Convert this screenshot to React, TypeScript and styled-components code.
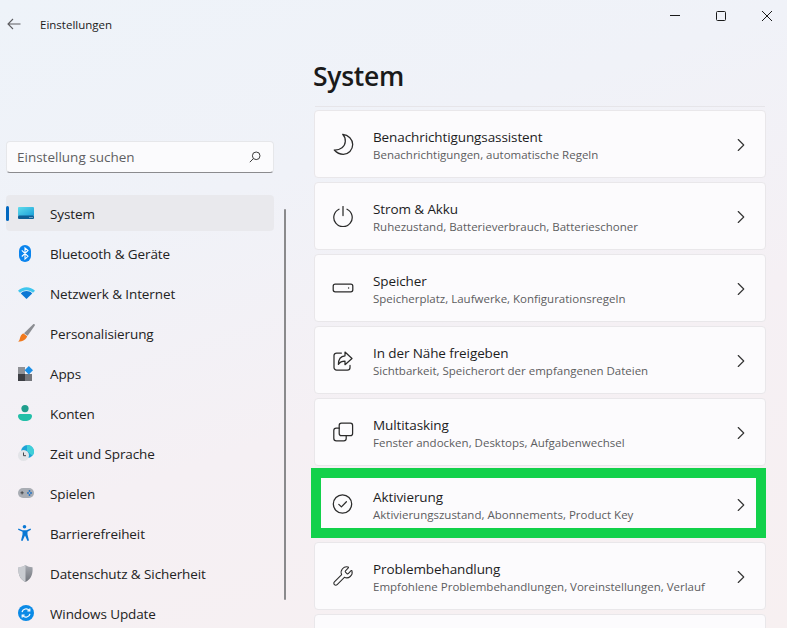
import React from "react"
import styled, { createGlobalStyle } from "styled-components"
import { ChevronRight, Wrench } from "lucide-react"

const GlobalStyle = createGlobalStyle`
  html, body {
    margin: 0;
    padding: 0;
    height: 100%;
    overflow: hidden;
    font-family: "Open Sans", "Noto Sans", "Liberation Sans", sans-serif;
  }
`

const Line = ({ children }: { children: React.ReactNode }) => (
  <svg width="22" height="22" viewBox="0 0 22 22" fill="none" stroke="#2b2b2b" strokeWidth="1.25" strokeLinecap="round" strokeLinejoin="round">
    {children}
  </svg>
)

const MoonIcon = () => (
  <Line>
    <path d="M10.7 1.3C16.5 1.8 20.7 6.5 20.7 11.6 20.7 17 16.5 21.3 11.3 21.3 7.8 21.3 4.6 19.6 2.3 17 8.5 17.2 13 13.5 13.3 8.5 13.5 5.8 12.6 3.3 10.7 1.3z" />
  </Line>
)

const PowerIcon = () => (
  <Line>
    <path d="M11 1.5v9" />
    <path d="M7 4.2a9.2 9.2 0 1 0 8 0" />
  </Line>
)

const StorageIcon = () => (
  <Line>
    <rect x="1.2" y="7.2" width="19.6" height="7.6" rx="2" />
    <circle cx="16.6" cy="11" r=".7" fill="#2b2b2b" stroke="none" />
  </Line>
)

const ShareIcon = () => (
  <Line>
    <path d="M9.4 4H4.6A2.6 2.6 0 0 0 2 6.6v11.8A2.6 2.6 0 0 0 4.6 21h10.8a2.6 2.6 0 0 0 2.6-2.6v-2" />
    <path d="M13 3l7 6.5-7 6.2v-3.5c-3 0-5 .8-6.6 3.2 0-5 2.4-8.3 6.6-8.600z" />
  </Line>
)

const MultitaskIcon = () => (
  <Line>
    <rect x="7.2" y="2.2" width="13.4" height="12.4" rx="2.2" />
    <path d="M7.2 7.2H4.2a2.4 2.4 0 0 0-2.4 2.4v7.6a2.6 2.6 0 0 0 2.6 2.6h7.4a2.4 2.4 0 0 0 2.4-2.4v-2.8" />
  </Line>
)

const CheckIcon = () => (
  <Line>
    <circle cx="10.5" cy="11" r="9.2" />
    <path d="M6.8 11.4l2.6 2.5 5-5.2" />
  </Line>
)

const SystemIcon = () => (
  <svg width="16" height="12" viewBox="0 0 16 12">
    <defs>
      <linearGradient id="sys" x1="0" y1="0" x2="1" y2="1">
        <stop offset="0" stopColor="#5fdcec" />
        <stop offset="1" stopColor="#1a9fd8" />
      </linearGradient>
    </defs>
    <rect width="16" height="9" rx="1" fill="url(#sys)" />
    <rect width="16" height="3.6" y="8.4" rx="1" fill="#0e5f95" />
    <rect x="11.5" y="10" width="1" height="1" fill="#cfe6f2" />
    <rect x="13.5" y="10" width="1" height="1" fill="#cfe6f2" />
  </svg>
)

const BluetoothIcon = () => (
  <svg width="14" height="17" viewBox="0 0 14 17">
    <rect x="1" width="12" height="17" rx="6" fill="#0a84ee" />
    <path d="M3.8 5.3l6.2 6-3 2.8V2.9l3 2.6-6.2 6" fill="none" stroke="#fff" strokeWidth="1.1" />
  </svg>
)

const WifiIcon = () => (
  <svg width="17" height="12" viewBox="0 0 17 12">
    <path d="M0 3.8C4.6-1 12.4-1 17 3.8L15 5.8C11.4 2.4 5.6 2.4 2 5.8z" fill="#3fc6ee" />
    <path d="M2.8 6.4C6 3.3 11 3.3 14.2 6.4L8.5 12z" fill="#0c78d4" />
  </svg>
)

const BrushIcon = () => (
  <svg width="17" height="18" viewBox="0 0 17 18">
    <path d="M15.2.3c.9-.6 2 .3 1.600 1.300L9.600 11.800 6 9.200z" fill="#8b8d92" />
    <path d="M5.600 9.600l3.600 2.600c-.8 3-4.200 5.400-9 5.500 1.800-1.400 1.400-3.400 2.400-5.400.6-1.300 1.600-2.400 3-2.700z" fill="#f0791e" />
  </svg>
)

const AppsIcon = () => (
  <svg width="15" height="15" viewBox="0 0 15 15">
    <rect y="1" width="7" height="7" fill="#8f9196" />
    <rect y="8" width="7" height="7" fill="#3d3f44" />
    <rect x="7" y="8" width="7" height="7" fill="#74767b" />
    <path d="M10.8 0L15 4.200 10.800 8.400 6.600 4.200z" fill="#1b8fe6" />
  </svg>
)

const UserIcon = () => (
  <svg width="14" height="16" viewBox="0 0 14 16">
    <circle cx="7" cy="3.6" r="3.6" fill="#1f9e8d" />
    <path d="M0 11c0-1.200 1-2 2-2h10c1 0 2 .8 2 2 0 3-3 5-7 5s-7-2-7-5z" fill="#22bfa8" />
  </svg>
)

const ClockIcon = () => (
  <svg width="16" height="16" viewBox="0 0 16 16">
    <circle cx="9.5" cy="6.5" r="6.5" fill="#1ea3d6" />
    <path d="M9 0a6.500 6.500 0 0 1 7 6.500c0 1.500-.5 3-1.500 4-2-.5-3-3-5.500-4.500z" fill="#40cfd8" />
    <circle cx="5.5" cy="10.5" r="5.5" fill="#e3e4e8" />
    <path d="M5.500 7.500v3.200h2.500" fill="none" stroke="#44464b" strokeWidth="1" />
  </svg>
)

const GamepadIcon = () => (
  <svg width="16" height="10" viewBox="0 0 16 10">
    <rect width="16" height="10" rx="5" fill="#a9adb4" />
    <path d="M2.500 4.800h3.200M4.100 3.200v3.200" stroke="#3a3c40" strokeWidth=".9" />
    <circle cx="11.5" cy="3" r=".9" fill="#1d6fc4" />
    <circle cx="13" cy="5" r=".9" fill="#1d6fc4" />
    <circle cx="10" cy="5" r=".9" fill="#1d6fc4" />
    <circle cx="11.5" cy="7" r=".9" fill="#1d6fc4" />
  </svg>
)

const AccessIcon = () => (
  <svg width="13" height="16" viewBox="0 0 13 16">
    <circle cx="6.5" cy="1.8" r="1.8" fill="#0a78d4" />
    <path d="M.5 3.600l4 1.700h4l4-1.700.5 1.200-3.500 2v2.700l1.500 6-1.500.5-2.500-5.500-2.500 5.500-1.500-.5 1.500-6V6.800L0 4.800z" fill="#0a78d4" />
  </svg>
)

const ShieldIcon = () => (
  <svg width="15" height="17" viewBox="0 0 15 17">
    <defs>
      <linearGradient id="shield" x1="0" y1="0" x2="0" y2="1">
        <stop offset="0" stopColor="#a8abb2" />
        <stop offset="1" stopColor="#70747b" />
      </linearGradient>
    </defs>
    <path d="M7.500 0c2 1.500 4.500 2.200 7 2.300.6 6.500-1.300 12-7 14.700C1.800 14.300-.1 8.800.5 2.300 3 2.200 5.500 1.500 7.500 0z" fill="url(#shield)" />
    <path d="M7.500 0c-2 1.500-4.500 2.200-7 2.300-.6 6.500 1.300 12 7 14.700z" fill="#c9ccd1" />
  </svg>
)

const UpdateIcon = () => (
  <svg width="16" height="16" viewBox="0 0 16 16">
    <circle cx="8" cy="8" r="8" fill="#0a8ae6" />
    <path d="M4 7.200a4.200 4.200 0 0 1 7.300-1.900M12 8.800a4.200 4.200 0 0 1-7.300 1.900" fill="none" stroke="#fff" strokeWidth="1.2" />
    <path d="M11.800 3.400v2.400H9.400M4.200 12.600v-2.400h2.400" fill="none" stroke="#fff" strokeWidth="1.2" />
  </svg>
)

const navItems = [
  { label: "System", icon: <SystemIcon />, active: true },
  { label: "Bluetooth & Geräte", icon: <BluetoothIcon /> },
  { label: "Netzwerk & Internet", icon: <WifiIcon /> },
  { label: "Personalisierung", icon: <BrushIcon /> },
  { label: "Apps", icon: <AppsIcon /> },
  { label: "Konten", icon: <UserIcon /> },
  { label: "Zeit und Sprache", icon: <ClockIcon /> },
  { label: "Spielen", icon: <GamepadIcon /> },
  { label: "Barrierefreiheit", icon: <AccessIcon /> },
  { label: "Datenschutz & Sicherheit", icon: <ShieldIcon /> },
  { label: "Windows Update", icon: <UpdateIcon /> },
]

const settings = [
  { title: "Benachrichtigungsassistent", sub: "Benachrichtigungen, automatische Regeln", icon: <MoonIcon /> },
  { title: "Strom & Akku", sub: "Ruhezustand, Batterieverbrauch, Batterieschoner", icon: <PowerIcon /> },
  { title: "Speicher", sub: "Speicherplatz, Laufwerke, Konfigurationsregeln", icon: <StorageIcon /> },
  { title: "In der Nähe freigeben", sub: "Sichtbarkeit, Speicherort der empfangenen Dateien", icon: <ShareIcon /> },
  { title: "Multitasking", sub: "Fenster andocken, Desktops, Aufgabenwechsel", icon: <MultitaskIcon /> },
  { title: "Aktivierung", sub: "Aktivierungszustand, Abonnements, Product Key", icon: <CheckIcon />, marked: true },
  { title: "Problembehandlung", sub: "Empfohlene Problembehandlungen, Voreinstellungen, Verlauf", icon: <Wrench size={22} strokeWidth={1.15} color="#2b2b2b" /> },
]

const App = () => (
  <Window>
    <GlobalStyle />
    <TitleBar>
      <BackButton>
        <svg width="14" height="12" viewBox="0 0 14 12" fill="none" stroke="#5d5d60" strokeWidth="1.1">
          <path d="M13.500 6H1M6 1L1 6l5 5" />
        </svg>
      </BackButton>
      <AppName>Einstellungen</AppName>
      <WindowControls>
        <ControlButton>
          <svg width="10" height="10" viewBox="0 0 10 10" stroke="#1a1a1a" strokeWidth="1"><path d="M0 4.500h10" /></svg>
        </ControlButton>
        <ControlButton>
          <svg width="10" height="10" viewBox="0 0 10 10" fill="none" stroke="#1a1a1a" strokeWidth="1"><rect x=".5" y=".5" width="9" height="9" rx="1" /></svg>
        </ControlButton>
        <ControlButton>
          <svg width="10" height="10" viewBox="0 0 10 10" stroke="#1a1a1a" strokeWidth="1"><path d="M0 0l10 10M10 0L0 10" /></svg>
        </ControlButton>
      </WindowControls>
    </TitleBar>
    <Body>
      <Sidebar>
        <SearchBox>
          <SearchText>Einstellung suchen</SearchText>
          <svg width="12" height="12" viewBox="0 0 12 12" fill="none" stroke="#3c3c3c" strokeWidth="1">
            <circle cx="7.2" cy="4.8" r="3.8" />
            <path d="M4.400 7.600L.8 11.200" />
          </svg>
        </SearchBox>
        <NavList>
          {navItems.map((item) => (
            <NavItem key={item.label} $active={item.active}>
              <NavIcon>{item.icon}</NavIcon>
              <NavLabel>{item.label}</NavLabel>
            </NavItem>
          ))}
        </NavList>
        <ScrollThumb />
      </Sidebar>
      <Main>
        <PageTitle>System</PageTitle>
        <TopEdge />
        <CardList>
          {settings.map((s) => (
            <Card key={s.title} $marked={s.marked}>
              <CardIcon>{s.icon}</CardIcon>
              <CardText>
                <CardTitle>{s.title}</CardTitle>
                <CardSub>{s.sub}</CardSub>
              </CardText>
              <Chevron size={22} strokeWidth={1.25} color="#333" />
            </Card>
          ))}
          <Card />
        </CardList>
      </Main>
    </Body>
  </Window>
)

const Window = styled.div`
  width: 787px;
  height: 628px;
  overflow: hidden;
  display: flex;
  flex-direction: column;
  color: #1b1b1b;
  background: linear-gradient(162deg, #eef3f9 0%, #f0f2f8 30%, #f5f0f4 60%, #f7f0f1 100%);
`

const TitleBar = styled.header`
  height: 48px;
  flex: none;
  display: flex;
  align-items: center;
  padding: 0 15px 0 7px;
`

const BackButton = styled.div`
  width: 33px;
  display: flex;
`

const AppName = styled.div`
  font-size: 11.5px;
`

const WindowControls = styled.div`
  margin-left: auto;
  align-self: flex-start;
  margin-top: 11px;
  display: flex;
  gap: 36px;
`

const ControlButton = styled.div`
  width: 10px;
  height: 10px;
  display: flex;
`

const Body = styled.div`
  flex: 1;
  min-height: 0;
  display: flex;
`

const Sidebar = styled.aside`
  position: relative;
  width: 314px;
  flex: none;
  padding: 93px 0 0 6px;
  box-sizing: border-box;
`

const SearchBox = styled.div`
  width: 268px;
  height: 32px;
  margin-bottom: 22px;
  box-sizing: border-box;
  padding: 0 12px 0 10px;
  display: flex;
  align-items: center;
  justify-content: space-between;
  background: #fbfbfd;
  border: 1px solid #e6e7ea;
  border-bottom: 1px solid #8b8b8e;
  border-radius: 4px;
`

const SearchText = styled.span`
  font-size: 13.5px;
  color: #5f5f62;
`

const NavList = styled.nav`
  width: 268px;
  display: flex;
  flex-direction: column;
  gap: 4px;
`

const NavItem = styled.div<{ $active?: boolean }>`
  position: relative;
  height: 36px;
  flex: none;
  display: flex;
  align-items: center;
  border-radius: 4px;
  background: ${(p) => (p.$active ? "#e9e9ed" : "transparent")};

  &::before {
    content: "";
    display: ${(p) => (p.$active ? "block" : "none")};
    position: absolute;
    left: 0;
    top: 11px;
    width: 3px;
    height: 15px;
    border-radius: 2px;
    background: #0067c0;
  }
`

const NavIcon = styled.span`
  width: 44px;
  padding-left: 12px;
  box-sizing: border-box;
  display: flex;
  align-items: center;
`

const NavLabel = styled.span`
  margin-top: 2px;
  font-size: 13.5px;
  letter-spacing: -0.1px;
  color: #222;
`

const ScrollThumb = styled.div`
  position: absolute;
  left: 284px;
  top: 161px;
  width: 2px;
  height: 391px;
  border-radius: 1px;
  background: #8a8a8c;
`

const Main = styled.main`
  flex: 1;
  min-width: 0;
  padding-right: 21px;
  display: flex;
  flex-direction: column;
`

const PageTitle = styled.h1`
  flex: none;
  margin: 8px 0 0 -1px;
  height: 42px;
  line-height: 40px;
  font-size: 26.5px;
  font-weight: 600;
  letter-spacing: -0.3px;
  color: #1a1a1a;
`

const TopEdge = styled.div`
  flex: none;
  height: 1px;
  margin: 8px 1px 3px;
  background: #e6e5e9;
`

const CardList = styled.div`
  flex: none;
  display: flex;
  flex-direction: column;
  gap: 4px;
`

const Card = styled.div<{ $marked?: boolean }>`
  position: relative;
  height: 68px;
  flex: none;
  box-sizing: border-box;
  display: flex;
  align-items: center;
  padding: 0 13px 0 17px;
  background: #fcfbfd;
  border: 1px solid #e9e7ea;
  border-radius: 4px;

  &::after {
    content: "";
    display: ${(p) => (p.$marked ? "block" : "none")};
    position: absolute;
    left: -4px;
    right: -1px;
    top: -3px;
    bottom: -1px;
    border: 10px solid #12d14b;
    pointer-events: none;
  }
`

const CardIcon = styled.div`
  width: 41px;
  height: 22px;
  flex: none;
  display: flex;
  align-items: center;
`

const CardText = styled.div`
  flex: 1;
  min-width: 0;
  padding-top: 4px;
`

const CardTitle = styled.div`
  font-size: 13.5px;
  line-height: 18px;
  letter-spacing: -0.1px;
  color: #1d1d1d;
`

const CardSub = styled.div`
  font-size: 11.5px;
  line-height: 18px;
  color: #5d5d5f;
`

const Chevron = styled(ChevronRight)`
  margin-top: 2px;
  flex: none;
`

export default App
